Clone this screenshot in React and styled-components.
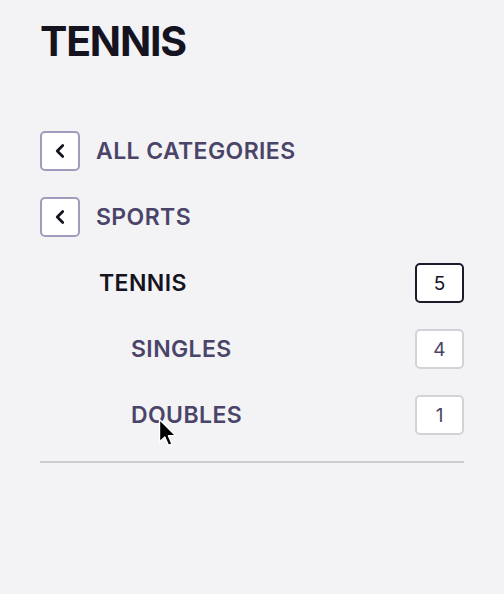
import React from "react";
import styled, { createGlobalStyle } from "styled-components";
import { ChevronLeft } from "lucide-react";

const GlobalStyle = createGlobalStyle`
  html, body {
    margin: 0;
    background: #f3f3f6;
  }
  body {
    font-family: Inter, "Liberation Sans", sans-serif;
  }
`;

// 전체 패널
const Panel = styled.div`
  position: relative;
  width: 504px;
  height: 594px;
  box-sizing: border-box;
  padding: 17px 40px 0 40px;
`;

const Heading = styled.h1`
  margin: 0;
  font-size: 41px;
  line-height: 48px;
  font-weight: 700;
  color: #15131f;
  letter-spacing: -1.2px;
`;

const List = styled.ul`
  list-style: none;
  margin: 66px 0 0 0;
  padding: 0 0 26px 0;
  display: flex;
  flex-direction: column;
  gap: 26px;
  border-bottom: 2px solid #cdccd3;
`;

const Row = styled.li`
  display: flex;
  align-items: center;
  height: 40px;
  padding-left: ${(p) => p.$indent || 0}px;
`;

const BackButton = styled.button`
  width: 40px;
  height: 40px;
  box-sizing: border-box;
  border: 2px solid #a29cbc;
  border-radius: 5px;
  background: #ffffff;
  display: flex;
  align-items: center;
  justify-content: center;
  padding: 0;
  margin-right: 16px;
  color: #15131f;
  cursor: pointer;
`;

const Label = styled.span`
  flex: 1;
  font-size: 23px;
  font-weight: 600;
  letter-spacing: 0.4px;
  color: ${(p) => (p.$active ? "#15131f" : "#4a4468")};
`;

const Count = styled.span`
  width: 49px;
  height: 40px;
  box-sizing: border-box;
  border: ${(p) => (p.$active ? "2px solid #1d1b2b" : "2px solid #d3d2d9")};
  border-radius: 5px;
  background: #ffffff;
  display: flex;
  align-items: center;
  justify-content: center;
  font-size: 19px;
  color: ${(p) => (p.$active ? "#15131f" : "#4a4468")};
`;

// 마우스 커서 (화면 위에 떠 있음)
const Pointer = styled.svg`
  position: absolute;
  left: 158px;
  top: 418px;
`;

const crumbs = ["ALL CATEGORIES", "SPORTS"];

const items = [
  { name: "TENNIS", count: 5, indent: 59, active: true },
  { name: "SINGLES", count: 4, indent: 91 },
  { name: "DOUBLES", count: 1, indent: 91 },
];

const App = () => (
  <>
    <GlobalStyle />
    <Panel>
      <Heading>TENNIS</Heading>
      <List>
        {crumbs.map((c) => (
          <Row key={c}>
            <BackButton aria-label={`back to ${c}`}>
              <ChevronLeft size={22} strokeWidth={3} />
            </BackButton>
            <Label>{c}</Label>
          </Row>
        ))}
        {items.map((it) => (
          <Row key={it.name} $indent={it.indent}>
            <Label $active={it.active}>{it.name}</Label>
            <Count $active={it.active}>{it.count}</Count>
          </Row>
        ))}
      </List>
      <Pointer width="22" height="36" viewBox="0 0 22 36">
        <path
          d="M1.5 1.5 L1.5 24 L6.8 19 L10.5 27.5 L14 26 L10.4 17.8 L17.5 17.6 Z"
          fill="#000"
          stroke="#fff"
          strokeWidth="1.4"
          strokeLinejoin="round"
        />
      </Pointer>
    </Panel>
  </>
);

export default App;
